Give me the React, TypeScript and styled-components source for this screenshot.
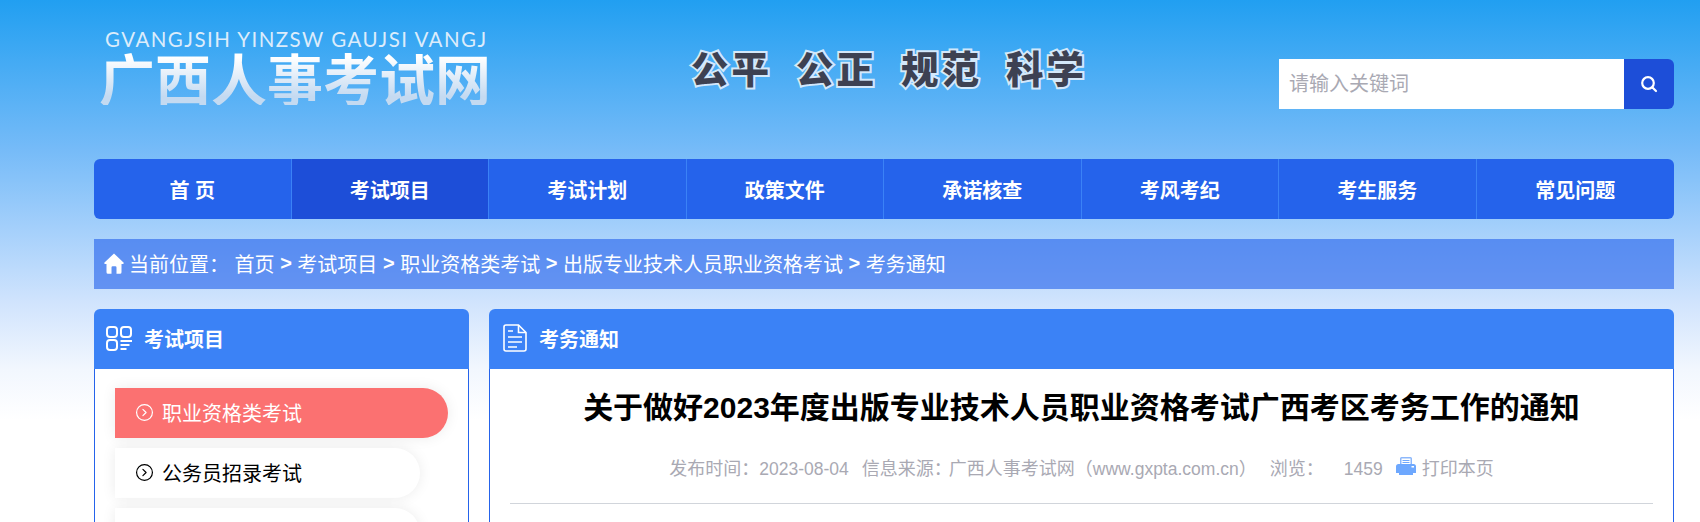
import React from 'react';
import styled, { createGlobalStyle } from 'styled-components';
import { CircleChevronRight } from 'lucide-react';

const GlobalStyle = createGlobalStyle`
  html, body {
    margin: 0;
    padding: 0;
    height: 522px;
    overflow: hidden;
  }
  body {
    font-family: "Liberation Sans", "Noto Sans CJK SC", sans-serif;
    background: #fff;
  }
  * {
    box-sizing: border-box;
  }
`;

const Page = styled.div`
  height: 522px;
  overflow: hidden;
  padding: 0 26px 0 94px;
  background: linear-gradient(180deg, #219ff1 0%, #76bbf8 150px, #a5d0fb 230px, #cfe3fd 300px, #f2f7fe 370px, #fff 420px);
`;

const Header = styled.header`
  height: 159px;
  display: flex;
  align-items: flex-start;
`;

const Logo = styled.div`
  width: 520px;
  padding: 29px 0 0 5px;
`;

const LogoEn = styled.div`
  font-family: Lato, "Noto Sans", sans-serif;
  font-size: 20.5px;
  line-height: 20px;
  letter-spacing: 1.46px;
  color: #dcecfb;
  white-space: nowrap;
  padding-left: 6px;
`;

const LogoCn = styled.div`
  font-family: "Noto Sans CJK SC", sans-serif;
  font-weight: 700;
  font-size: 56px;
  line-height: 56px;
  white-space: nowrap;
  background: linear-gradient(180deg, #ffffff 15%, #c4daf1 85%);
  -webkit-background-clip: text;
  background-clip: text;
  color: transparent;
`;

const Slogan = styled.div`
  width: 665px;
  padding: 44px 0 0 77px;
  display: flex;
  gap: 24px;
`;

const SloganWord = styled.span`
  font-family: "Noto Sans CJK SC", sans-serif;
  font-weight: 900;
  font-size: 37.5px;
  line-height: 46px;
  letter-spacing: 3px;
  color: #3d4152;
  -webkit-text-stroke: 4px #d3e8fa;
  paint-order: stroke fill;
  white-space: nowrap;
`;

const SearchBox = styled.form`
  margin-top: 59px;
  width: 395px;
  height: 50px;
  display: flex;
  border-radius: 0 6px 6px 0;
  overflow: hidden;
`;

const SearchInput = styled.input`
  flex: 1;
  min-width: 0;
  border: 0;
  outline: 0;
  padding: 0 10px;
  font-family: inherit;
  font-size: 20px;
  background: #fff;
  &::placeholder {
    color: #a9a9b3;
  }
`;

const SearchButton = styled.button`
  width: 50px;
  border: 0;
  padding: 0;
  background: #1d4ed8;
  display: flex;
  align-items: center;
  justify-content: center;
`;

const Nav = styled.nav`
  height: 60px;
  display: grid;
  grid-template-columns: repeat(8, 1fr);
  background: #2563eb;
  border-radius: 6px;
  overflow: hidden;
`;

const NavItem = styled.a<{ $active?: boolean }>`
  display: flex;
  align-items: center;
  justify-content: center;
  font-size: 20px;
  font-weight: 700;
  color: #fff;
  background: ${(p) => (p.$active ? '#1d4ed8' : 'transparent')};
  border-right: 1px solid #3b82f6;
  white-space: pre;
  &:last-child {
    border-right: 0;
  }
`;

const Breadcrumb = styled.div`
  margin-top: 20px;
  height: 50px;
  padding: 0 0 2px 10px;
  display: flex;
  align-items: center;
  background: rgba(37, 99, 235, 0.62);
  color: #fff;
  font-size: 20px;
  white-space: pre;
`;

const HomeIcon = styled.svg`
  width: 20px;
  height: 21px;
  margin-right: 5px;
  fill: #fff;
`;

const Sep = styled.b`
  font-weight: 700;
`;

const Columns = styled.div`
  margin-top: 20px;
  display: flex;
  gap: 20px;
`;

const Panel = styled.section<{ $side?: boolean }>`
  ${(p) => (p.$side ? 'width: 375px;' : 'flex: 1;')}
  border-radius: 6px 6px 0 0;
  overflow: hidden;
`;

const PanelHead = styled.div`
  height: 60px;
  background: #3b82f6;
  display: flex;
  align-items: center;
  gap: 12px;
  padding: 0 0 2px 12px;
  color: #fff;
  font-size: 20px;
  font-weight: 700;
`;

const PanelBody = styled.div`
  height: 240px;
  background: #fff;
  border: 1px solid #2563eb;
  border-width: 0 1px;
`;

const PanelIcon = styled.svg`
  width: 26px;
  height: 28px;
  flex: none;
  fill: none;
  stroke: #fff;
`;

const SideList = styled.ul`
  list-style: none;
  margin: 0;
  padding: 19px 0 0 20px;
  display: flex;
  flex-direction: column;
  gap: 10px;
`;

const SideItem = styled.li<{ $active?: boolean }>`
  width: ${(p) => (p.$active ? '333px' : '305px')};
  height: 50px;
  padding: 0 0 2px 20px;
  display: flex;
  align-items: center;
  gap: 8px;
  font-size: 20px;
  border-radius: 0 25px 25px 0;
  color: ${(p) => (p.$active ? '#fff' : '#000')};
  background: ${(p) => (p.$active ? '#fb7171' : '#fff')};
  box-shadow: 0 0 14px rgba(0, 0, 0, 0.08);
`;

const Article = styled.div`
  padding: 0 20px;
`;

const Title = styled.h1`
  margin: 0;
  padding-top: 15px;
  height: 77px;
  font-size: 30px;
  line-height: 48px;
  font-weight: 700;
  color: #000;
  text-align: center;
  white-space: nowrap;
`;

const Meta = styled.div`
  height: 58px;
  padding-top: 8px;
  display: flex;
  align-items: baseline;
  justify-content: center;
  border-bottom: 1px solid #d1d5db;
  font-size: 18px;
  color: #a9a9b3;
  white-space: nowrap;
`;

const MetaItem = styled.span<{ $gap?: number }>`
  margin-left: ${(p) => p.$gap ?? 0}px;
`;

// the digits and the web address run a little narrower than the Chinese text
const Latin = styled.span`
  font-size: 17.5px;
`;

const SourceName = styled.span`
  margin-left: -3px;
`;

const PrintIcon = styled.svg`
  width: 20px;
  height: 18px;
  margin: 3px 6px 0 13px;
  align-self: flex-start;
`;

const navItems = ['首 页', '考试项目', '考试计划', '政策文件', '承诺核查', '考风考纪', '考生服务', '常见问题'];

export default function App() {
  return (
    <Page>
      <GlobalStyle />
      <Header>
        <Logo>
          <LogoEn>GVANGJSIH YINZSW GAUJSI VANGJ</LogoEn>
          <LogoCn>广西人事考试网</LogoCn>
        </Logo>
        <Slogan>
          <SloganWord>公平</SloganWord>
          <SloganWord>公正</SloganWord>
          <SloganWord>规范</SloganWord>
          <SloganWord>科学</SloganWord>
        </Slogan>
        <SearchBox>
          <SearchInput placeholder="请输入关键词" />
          <SearchButton type="button" aria-label="搜索">
            <svg width="18" height="18" viewBox="0 0 18 18" fill="none" stroke="#fff" strokeWidth="2.2" strokeLinecap="round">
              <circle cx="8" cy="8" r="5.8" />
              <path d="M12.5 12.5 16 16" />
            </svg>
          </SearchButton>
        </SearchBox>
      </Header>

      <Nav>
        {navItems.map((item, i) => (
          <NavItem key={item} $active={i === 1}>{item}</NavItem>
        ))}
      </Nav>

      <Breadcrumb>
        <HomeIcon viewBox="0 0 20 21">
          <path d="M10 0.500 19.500 9.500a.8.8 0 0 1-.5 1.400H17.500v8.300a1.500 1.500 0 0 1-1.500 1.500h-3.500v-6.200a1.200 1.200 0 0 0-1.200-1.200H8.700a1.200 1.200 0 0 0-1.200 1.200v6.200H4a1.500 1.500 0 0 1-1.500-1.500v-8.300H1a.8.8 0 0 1-.5-1.400Z" />
        </HomeIcon>
        当前位置： 首页 <Sep>&gt;</Sep> 考试项目 <Sep>&gt;</Sep> 职业资格类考试 <Sep>&gt;</Sep> 出版专业技术人员职业资格考试 <Sep>&gt;</Sep> 考务通知
      </Breadcrumb>

      <Columns>
        <Panel $side>
          <PanelHead>
            <PanelIcon viewBox="0 0 26 28" strokeWidth="2">
              <rect x="1" y="3" width="10" height="10" rx="3" />
              <rect x="15" y="3" width="10" height="10" rx="3" />
              <rect x="1" y="16" width="10" height="10" rx="3" />
              <path d="M14.500 17h11.500M14.500 21h9M14.500 25h6" />
            </PanelIcon>
            考试项目
          </PanelHead>
          <PanelBody>
            <SideList>
              <SideItem $active>
                <CircleChevronRight size={19} strokeWidth={1.5} />
                职业资格类考试
              </SideItem>
              <SideItem>
                <CircleChevronRight size={19} strokeWidth={1.5} />
                公务员招录考试
              </SideItem>
              <SideItem />
            </SideList>
          </PanelBody>
        </Panel>

        <Panel>
          <PanelHead>
            <PanelIcon viewBox="0 0 26 28" strokeWidth="1.6">
              <path d="M5 1h12.500L25 8.500V25a2 2 0 0 1-2 2H5a2 2 0 0 1-2-2V3a2 2 0 0 1 2-2Z" />
              <path d="M17.500 1v7.500H25M7 7h5M7 13h14M7 18h14M7 23h9" />
            </PanelIcon>
            考务通知
          </PanelHead>
          <PanelBody>
            <Article>
              <Title>关于做好2023年度出版专业技术人员职业资格考试广西考区考务工作的通知</Title>
              <Meta>
                <MetaItem>发布时间：<Latin>2023-08-04</Latin></MetaItem>
                <MetaItem $gap={13}>信息来源：<SourceName>广西人事考试网（<Latin>www.gxpta.com.cn</Latin>）</SourceName></MetaItem>
                <MetaItem $gap={13}>浏览：</MetaItem>
                <MetaItem $gap={20}><Latin>1459</Latin></MetaItem>
                <PrintIcon viewBox="0 0 20 18">
                  <path d="M4 8V1.500A1.500 1.500 0 0 1 5.500 0h9A1.500 1.500 0 0 1 16 1.500V8Z" fill="#8db8fb" />
                  <path d="M5.500 1.500h9V8h-9Z" fill="#fff" />
                  <path d="M6.500 3.500h7M6.500 5.500h7" stroke="#6ea8fe" strokeWidth="1" />
                  <path d="M2.500 7h15A2.500 2.500 0 0 1 20 9.500V16h-3v2H3v-2H0V9.500A2.500 2.500 0 0 1 2.500 7Z" fill="#6ea8fe" />
                  <rect x="15.500" y="9" width="2.500" height="1.500" fill="#fff" />
                </PrintIcon>
                <MetaItem>打印本页</MetaItem>
              </Meta>
            </Article>
          </PanelBody>
        </Panel>
      </Columns>
    </Page>
  );
}
